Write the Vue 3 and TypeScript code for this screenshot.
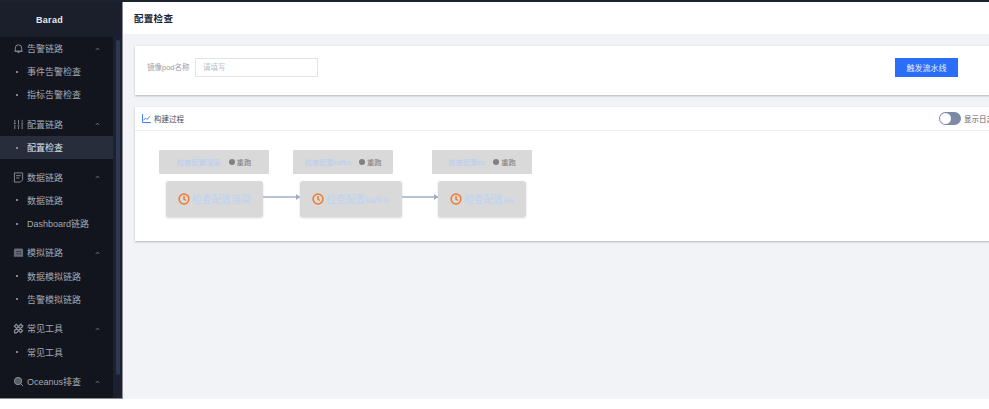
<script setup lang="ts">
interface Item { label: string; active?: boolean }
interface Group { title: string; icon: string; items: Item[] }
const groups: Group[] = [
  { title: '告警链路', icon: 'bell', items: [{ label: '事件告警检查' }, { label: '指标告警检查' }] },
  { title: '配置链路', icon: 'sliders', items: [{ label: '配置检查', active: true }] },
  { title: '数据链路', icon: 'doc', items: [{ label: '数据链路' }, { label: 'Dashboard链路' }] },
  { title: '模拟链路', icon: 'box', items: [{ label: '数据模拟链路' }, { label: '告警模拟链路' }] },
  { title: '常见工具', icon: 'tools', items: [{ label: '常见工具' }] },
  { title: 'Oceanus排查', icon: 'search', items: [] },
]
const heads = [
  { label: '检查配置渲染', cls: 'h1' },
  { label: '检查配置kafka', cls: 'h2' },
  { label: '检查配置es', cls: 'h3' },
]
const nodes = [
  { label: '检查配置渲染', cls: 'n1', arrow: true },
  { label: '检查配置kafka', cls: 'n2', arrow: true },
  { label: '检查配置es', cls: 'n3', arrow: false },
]
</script>

<template>
  <div class="page">
    <aside class="side">
      <div class="brand">Barad</div>
      <div class="menu-wrap">
        <nav class="menu">
          <section v-for="g in groups" :key="g.title" class="group">
            <div class="group-title">
              <svg class="gicon" viewBox="0 0 12 12" fill="none" stroke="currentColor" stroke-width="1">
                <template v-if="g.icon === 'bell'">
                  <path d="M2.500 9V5.500a3.500 3.500 0 0 1 7 0V9zM1.500 9h9M5 10.500h2" />
                </template>
                <template v-else-if="g.icon === 'sliders'">
                  <path d="M2 1v3M2 6.500v4.500M6 1v5M6 8.500V11M10 1v2M10 5.500V11M.8 5h2.400M4.800 7.500h2.400M8.800 4.500h2.400" />
                </template>
                <template v-else-if="g.icon === 'doc'">
                  <path d="M1.500 1h9v7.500L8 11H1.500zM3.500 4h5M3.500 6.500h3.500" />
                </template>
                <template v-else-if="g.icon === 'box'">
                  <path d="M2 1.500h8l1 1.500V10.500H1V3z" fill="currentColor" fill-opacity=".7" stroke="none" />
                  <path d="M3 5h6M3 7.500h6" stroke="#12151e" stroke-opacity=".6" />
                </template>
                <template v-else-if="g.icon === 'tools'">
                  <path d="M1.500 3.500l2-2 7 7-2 2zM10.500 3.500l-2-2-7 7 .5 2.500 2-.5zM7 2.500l2.500-1.500M9.500 5L11 2.500" stroke-width="1.300" />
                </template>
                <template v-else>
                  <circle cx="5.500" cy="5.500" r="4" fill="currentColor" fill-opacity=".6" />
                  <path d="M8.500 8.500l2.500 2.500" />
                </template>
              </svg>
              <span class="gtext">{{ g.title }}</span>
              <svg class="chev" viewBox="0 0 6 4" fill="none" stroke="currentColor" stroke-width="1"><path d="M1 3l2-2 2 2" /></svg>
            </div>
            <div v-for="it in g.items" :key="it.label" class="item" :class="{ active: it.active }">
              <i class="dot"></i><span>{{ it.label }}</span>
            </div>
          </section>
        </nav>
        <div class="track"><div class="thumb"></div></div>
      </div>
    </aside>

    <main class="main">
      <header class="title-bar">配置检查</header>
      <div class="content">
        <section class="card form-card">
          <label class="flabel">镜像pod名称</label>
          <input class="finput" placeholder="请填写" />
          <button class="primary">触发流水线</button>
        </section>

        <section class="card build-card">
          <div class="build-head">
            <svg class="chart" viewBox="0 0 10 10" fill="none" stroke="#2a6ef5" stroke-width="1"><path d="M.5 0v9.500H10M1.500 7l2.500-2.500 1.500 1.500L9 2.500" /></svg>
            <span class="build-title">构建过程</span>
            <span class="spacer"></span>
            <span class="switch"><i class="knob"></i></span>
            <span class="switch-label">显示日志</span>
          </div>
          <div class="flow">
            <div class="head-row">
              <div v-for="h in heads" :key="h.label" class="stage-head" :class="h.cls">
                <span class="head-link">{{ h.label }}</span>
                <i class="grey-dot"></i><span class="retry">重跑</span>
              </div>
            </div>
            <div class="node-row">
              <template v-for="n in nodes" :key="n.label">
                <div class="node" :class="n.cls">
                  <svg class="clock" viewBox="0 0 12 12" fill="none" stroke="#ef7a32" stroke-width="1.500">
                    <circle cx="6" cy="6" r="4.900" /><path d="M6 3v3.200l1.800 1.300" />
                  </svg>
                  <span>{{ n.label }}</span>
                </div>
                <div v-if="n.arrow" class="arrow"><i class="tip"></i></div>
              </template>
            </div>
          </div>
        </section>
      </div>
    </main>
  </div>
</template>

<style>
html, body { margin: 0; padding: 0; background: #fff; overflow: hidden; }
</style>

<style scoped>
.page {
  width: 989px;
  height: 399px;
  display: flex;
  overflow: hidden;
  border-top: 2px solid #1d2230;
  box-sizing: border-box;
  font-family: "Liberation Sans", "Noto Sans CJK SC", sans-serif;
}
.side { width: 123px; flex: none; background: #1b1f2b; display: flex; flex-direction: column; border-right: 1px solid #8a8d94; box-sizing: border-box; border-bottom: 1px solid #8a8d94; }
.brand { height: 35px; padding-right: 23px; flex: none; display: flex; align-items: center; justify-content: center; color: #e8eaee; font-size: 9px; font-weight: 700; letter-spacing: .3px; }
.menu-wrap { flex: 1; display: flex; min-height: 0; }
.menu { width: 113px; background: #12151e; flex: none; }
.track { flex: 1; background: #1c2030; padding: 3px 2px 23px 3px; display: flex; }
.thumb { flex: 1; background: #2e3850; border-radius: 2px; }
.group { padding-bottom: 6.300px; }
.group-title { height: 23.200px; display: flex; align-items: center; color: #a3a8b3; font-size: 9px; padding-left: 13px; }
.gicon { width: 11px; height: 11px; flex: none; color: #8b909b; }
.gtext { margin-left: 3px; flex: 1; }
.chev { width: 5px; height: 4px; margin-right: 13px; color: #8b909b; }
.item { height: 23.200px; display: flex; align-items: center; color: #a3a8b3; font-size: 9px; padding-left: 16px; }
.item.active { background: #282d3c; color: #dfe2e8; }
.dot { width: 2px; height: 2px; background: #a8adb8; border-radius: 50%; margin-right: 9px; }
.main { flex: 1; min-width: 0; background: #f1f3f7; display: flex; flex-direction: column; }
.title-bar { height: 31px; padding-bottom: 1px; background: #fff; flex: none; display: flex; align-items: center; padding-left: 11px; font-size: 9.500px; font-weight: 700; color: #1f2530; letter-spacing: .3px; }
.content { padding: 12px 0 0 12px; display: flex; flex-direction: column; gap: 12px; width: 890px; }
.card { background: #fff; box-shadow: 0 1px 2px rgba(60, 66, 85, .35); }
.form-card { height: 49px; box-sizing: border-box; display: flex; align-items: flex-start; padding: 12px 0 0 12px; }
.flabel { color: #9a9ea8; font-size: 7.500px; width: 48px; flex: none; line-height: 19px; }
.finput { width: 123px; height: 19px; box-sizing: border-box; border: 1px solid #dfe3ea; padding: 0 7px; font: 7.500px "Liberation Sans", "Noto Sans CJK SC", sans-serif; outline: none; background: #fff; }
.finput::placeholder { color: #b9bdc6; }
.primary { margin-left: 577px; width: 63px; height: 19px; border: none; background: #2a6ef8; color: #e8efff; font: 8px "Liberation Sans", "Noto Sans CJK SC", sans-serif; padding: 0; }
.build-card { height: 134px; }
.build-head { height: 24px; display: flex; align-items: center; padding-left: 7px; border-bottom: 1px solid #eceef2; box-sizing: border-box; }
.chart { width: 9px; height: 9px; margin-right: 3px; }
.build-title { font-size: 7.500px; color: #454a55; }
.spacer { width: 755px; flex: none; }
.switch { width: 22px; height: 13px; flex: none; border-radius: 7px; background: #7c8aa5; position: relative; }
.knob { position: absolute; left: 1px; top: 1px; width: 11px; height: 11px; border-radius: 50%; background: #fff; }
.switch-label { margin-left: 3px; font-size: 7.500px; color: #555a65; white-space: nowrap; }
.flow { padding: 19px 0 0 24px; }
.head-row { display: flex; }
.stage-head { height: 24px; background: #d9d9d9; border-radius: 1px; display: flex; align-items: center; justify-content: center; font-size: 7.300px; flex: none; }
.h1 { width: 110px; }
.h2 { width: 100px; margin-left: 24px; }
.h3 { width: 100px; margin-left: 39px; }
.head-link { color: #b8cef2; }
.grey-dot { width: 6px; height: 6px; border-radius: 50%; background: #808080; margin: 0 2px 0 8px; }
.retry { color: #7d7d7d; }
.node-row { margin-top: 7px; padding-left: 7px; display: flex; align-items: center; }
.node { height: 36px; box-sizing: border-box; background: #d9d9d9; border-radius: 3px; box-shadow: 0 1px 2px rgba(90, 100, 130, .25); display: flex; align-items: center; justify-content: center; color: #bcd3f3; font-size: 9.800px; white-space: nowrap; flex: none; padding-bottom: 1px; }
.n1 { width: 97px; }
.n2 { width: 102px; }
.n3 { width: 88px; }
.clock { width: 12px; height: 12px; margin-right: 2px; flex: none; }
.arrow { width: 36.500px; height: 2px; flex: none; background: #b9c3d8; position: relative; margin-top: -4px; }
.tip { position: absolute; right: 0; top: -2px; border-left: 4px solid #9eaac6; border-top: 3px solid transparent; border-bottom: 3px solid transparent; }
</style>
